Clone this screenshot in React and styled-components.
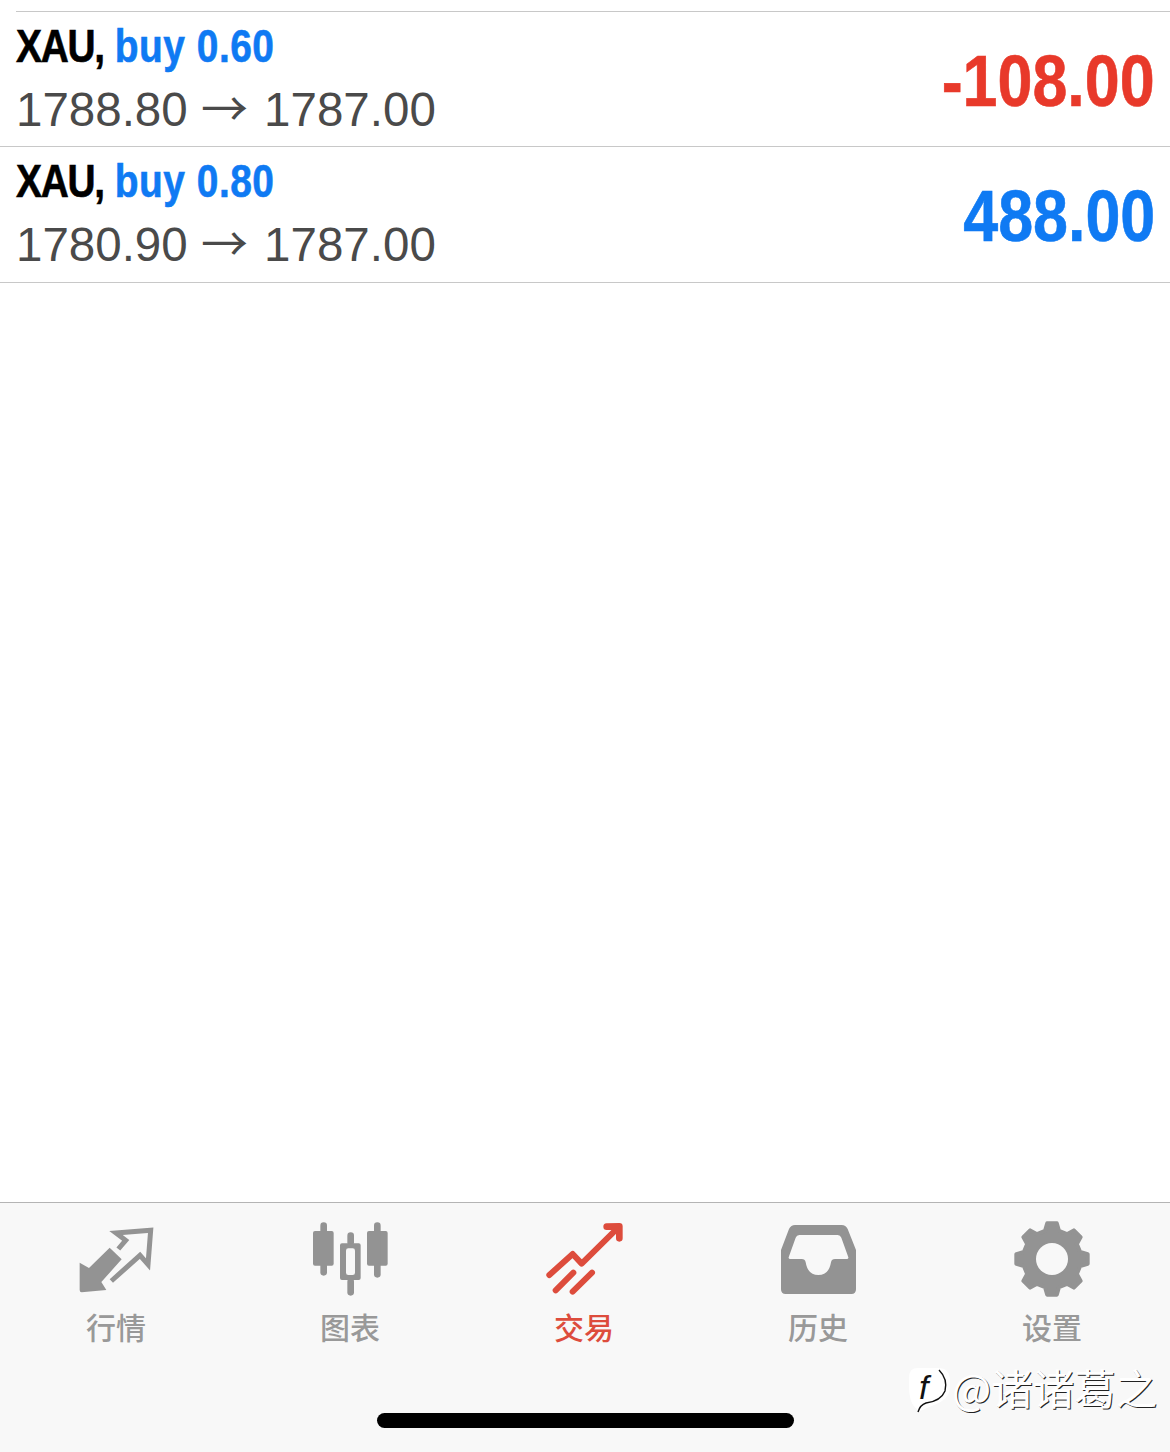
import React from 'react'
import styled, { createGlobalStyle } from 'styled-components'

const BLUE = '#0f7af3'
const RED = '#e8392a'
const ICON_GREY = '#939393'
const LABEL_GREY = '#999'
const ACTIVE = '#dd4c3c'
const CJK = '"Noto Sans CJK SC", "Liberation Sans", sans-serif'

const GlobalStyle = createGlobalStyle`
  html, body {
    margin: 0;
    padding: 0;
    background: #fff;
  }
`

const trades = [
  { id: 1, lots: '0.60', open: '1788.80', close: '1787.00', profit: '-108.00', loss: true },
  { id: 2, lots: '0.80', open: '1780.90', close: '1787.00', profit: '488.00', loss: false },
]

function gearPath (cx, cy, outer, root, hole) {
  const teeth = 8
  let d = ''
  for (let i = 0; i < teeth; i++) {
    const a = (i / teeth) * Math.PI * 2 - Math.PI / 2
    const step = Math.PI / teeth
    const pts = [
      [root, a - step * 0.62],
      [outer, a - step * 0.34],
      [outer, a + step * 0.34],
      [root, a + step * 0.62],
    ]
    pts.forEach(([r, t], j) => {
      const x = (cx + r * Math.cos(t)).toFixed(2)
      const y = (cy + r * Math.sin(t)).toFixed(2)
      d += `${i === 0 && j === 0 ? 'M' : 'L'}${x} ${y} `
    })
  }
  d += `Z M${cx + hole} ${cy} A${hole} ${hole} 0 1 0 ${cx - hole} ${cy} A${hole} ${hole} 0 1 0 ${cx + hole} ${cy} Z`
  return d
}

function MarketIcon () {
  return (
    <TabIcon viewBox="4 -3 270 255">
      <path d="M30 140 L58 156 L120 95 L156 130 L95 198 L110 222 L36 229 Q30 229 30 222 Z" fill={ICON_GREY} />
      <path
        d="M146 99 L168 73 L139 51 L243 43 L235 145 L211 118 L125 195"
        fill="none"
        stroke={ICON_GREY}
        strokeWidth="15"
      />
    </TabIcon>
  )
}

function ChartIcon () {
  return (
    <TabIcon viewBox="0 0 270 255">
      <g fill={ICON_GREY}>
        <rect x="24" y="48" width="62" height="104" rx="6" />
        <rect x="46" y="22" width="20" height="160" rx="10" />
        <rect x="186" y="48" width="62" height="104" rx="6" />
        <rect x="207" y="22" width="20" height="166" rx="10" />
        <rect x="127" y="52" width="20" height="40" rx="10" />
        <rect x="127" y="190" width="20" height="52" rx="10" />
        <path fillRule="evenodd" d="M111 85 H161 Q167 85 167 91 V189 Q167 195 161 195 H111 Q105 195 105 189 V91 Q105 85 111 85 Z M130 100 Q123 100 123 107 V173 Q123 180 130 180 H143 Q150 180 150 173 V107 Q150 100 143 100 Z" />
      </g>
    </TabIcon>
  )
}

function TradeIcon () {
  return (
    <TabIcon viewBox="-3 0 270 255">
      <g fill="none" stroke={ACTIVE} strokeWidth="18" strokeLinecap="round" strokeLinejoin="round">
        <path d="M28 180 L98 117 L125 146 L232 40" />
        <path d="M200 35 L238 34 L238 70" strokeWidth="20" />
        <path d="M47 226 L100 173" />
        <path d="M98 230 L156 173" />
      </g>
    </TabIcon>
  )
}

function HistoryIcon () {
  return (
    <TabIcon viewBox="729 45 270 255">
      <path
        fill={ICON_GREY}
        fillRule="evenodd"
        d="M795 75 H935 Q947 75 953 87 L978 150 V268 Q978 282 964 282 H767 Q753 282 753 268 V150 L777 87 Q783 75 795 75 Z
           M808 105 Q800 105 797 113 L776 172 Q775 177 781 177 H815 Q825 177 827 187 Q833 225 865 225 Q897 225 903 187 Q905 177 915 177 H950 Q956 177 955 172 L934 113 Q931 105 923 105 Z"
      />
    </TabIcon>
  )
}

function SettingsIcon () {
  return (
    <TabIcon viewBox="0 0 90 85">
      <path
        d={gearPath(45, 44, 36, 29, 16)}
        fill={ICON_GREY}
        stroke={ICON_GREY}
        strokeWidth="4"
        strokeLinejoin="round"
      />
      <circle cx="45" cy="44" r="16" fill="#f8f8f8" />
    </TabIcon>
  )
}

const tabs = [
  { label: '行情', Icon: MarketIcon },
  { label: '图表', Icon: ChartIcon },
  { label: '交易', Icon: TradeIcon, active: true },
  { label: '历史', Icon: HistoryIcon },
  { label: '设置', Icon: SettingsIcon },
]

function TradeRow ({ trade }) {
  return (
    <Row>
      <Info>
        <Title><Symbol>XAU,</Symbol> <Side>buy {trade.lots}</Side></Title>
        <Prices>{trade.open} <Arrow>→</Arrow> {trade.close}</Prices>
      </Info>
      <Profit $loss={trade.loss}>{trade.profit}</Profit>
    </Row>
  )
}

export default function App () {
  return (
    <Page>
      <GlobalStyle />
      <List>
        {trades.map(trade => <TradeRow key={trade.id} trade={trade} />)}
      </List>
      <TabBar>
        <Tabs>
          {tabs.map(({ label, Icon, active }) => (
            <Tab key={label}>
              <Icon />
              <TabLabel $active={active}>{label}</TabLabel>
            </Tab>
          ))}
        </Tabs>
        <HomeIndicator />
        <Watermark>
          <WatermarkLogo viewBox="0 0 44 46">
            <path d="M10 1 H30 Q42 1 42 14 V20 Q42 32 26 38 L12 44 Q2 40 1 22 V10 Q1 1 10 1 Z" fill="#fff" />
            <path d="M31 3 Q40 12 37 24 Q33 34 18 36 Q12 38 10 45" fill="none" stroke="#111" strokeWidth="1.4" />
            <text x="11" y="32" fontFamily="Liberation Sans, sans-serif" fontStyle="italic" fontSize="34" fill="#111">f</text>
          </WatermarkLogo>
          <WatermarkText>@诸诸葛之</WatermarkText>
        </Watermark>
      </TabBar>
    </Page>
  )
}

const Page = styled.div`
  width: 1170px;
  height: 1452px;
  display: flex;
  flex-direction: column;
  background: #fff;
  overflow: hidden;
`

const List = styled.div`
  flex: 1;
  padding-top: 11px;
`

const Row = styled.div`
  height: 135px;
  box-sizing: border-box;
  display: flex;
  align-items: flex-start;
  justify-content: space-between;
  margin-left: 16px;
  padding-right: 15px;
  border-top: 1px solid #c8c8c8;

  &:last-child {
    height: 137px;
    margin-left: 0;
    padding-left: 16px;
    border-bottom: 1px solid #c8c8c8;
  }
`

const Info = styled.div`
  display: flex;
  flex-direction: column;
  padding-top: 7px;
`

/* no condensed face installed, so the bold is squeezed by hand */
const Title = styled.div`
  font-family: "Liberation Sans", sans-serif;
  font-weight: 700;
  font-size: 46px;
  line-height: 54px;
  color: #000;
  white-space: pre;
  transform: scaleX(0.846);
  transform-origin: left center;
  -webkit-text-stroke: 0.6px currentColor;
`

const Symbol = styled.span`
  letter-spacing: -1.5px;
`

const Side = styled.span`
  color: ${BLUE};
  letter-spacing: 0.6px;
`

const Prices = styled.div`
  font-family: "Liberation Sans", sans-serif;
  font-size: 47.5px;
  line-height: 54px;
  margin-top: 9px;
  color: #4a4a4a;
  white-space: pre;
`

const Arrow = styled.span`
  font-family: "Noto Sans CJK SC", sans-serif;
  font-size: 47px;
  line-height: 1;
  margin-right: 3px;
`

const Profit = styled.div`
  font-family: "Liberation Sans", sans-serif;
  font-weight: 700;
  font-size: 73px;
  line-height: 84px;
  margin-top: 27px;
  color: ${({ $loss }) => ($loss ? RED : BLUE)};
  transform: scaleX(0.86);
  transform-origin: right center;
  -webkit-text-stroke: 0.6px currentColor;
`

const TabBar = styled.div`
  position: relative;
  height: 250px;
  box-sizing: border-box;
  display: flex;
  flex-direction: column;
  background: #f8f8f8;
  border-top: 1px solid #b4b4b4;
`

const Tabs = styled.div`
  display: grid;
  grid-template-columns: repeat(5, 234px);
  margin-left: -1px;
  padding-top: 12px;
`

const Tab = styled.div`
  display: flex;
  flex-direction: column;
  align-items: center;
`

const TabIcon = styled.svg`
  display: block;
  width: 90px;
  height: 85px;
`

const TabLabel = styled.div`
  font-family: ${CJK};
  font-weight: 500;
  font-size: 30px;
  line-height: 40px;
  margin-top: 6px;
  color: ${({ $active }) => ($active ? ACTIVE : LABEL_GREY)};
`

const HomeIndicator = styled.div`
  width: 417px;
  height: 15px;
  margin: 67px 0 0 377px;
  border-radius: 8px;
  background: #000;
`

const Watermark = styled.div`
  position: absolute;
  left: 908px;
  top: 164px;
  display: flex;
  align-items: flex-start;
`

const WatermarkLogo = styled.svg`
  display: block;
  width: 44px;
  height: 46px;
  overflow: visible;
`

const WatermarkText = styled.div`
  font-family: ${CJK};
  font-size: 41.5px;
  line-height: 46px;
  margin-top: -3px;
  color: #fff;
  white-space: nowrap;
  text-shadow: 1px 1px 0 #222;
`
